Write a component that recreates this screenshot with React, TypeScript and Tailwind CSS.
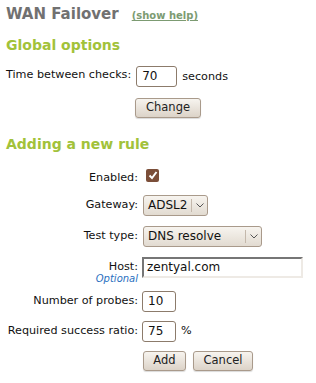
import React from "react";

const Btn = ({ children, className = "" }: { children: React.ReactNode; className?: string }) => (
  <button
    className={`h-[20px] rounded-[3px] border border-[#a99a8b] bg-gradient-to-b from-[#f7f4ef] to-[#dcd3c8] text-[11.5px] text-[#222] leading-none shadow-[0_1px_1px_rgba(0,0,0,0.15)] ${className}`}
  >
    {children}
  </button>
);

const TextBox = ({ value, className = "" }: { value: string; className?: string }) => (
  <div
    className={`flex h-[21px] items-center rounded-[3px] border border-[#8c7b6b] bg-white px-[5px] text-[12px] text-[#111] ${className}`}
  >
    {value}
  </div>
);

const Select = ({ value, className = "" }: { value: string; className?: string }) => (
  <div
    className={`flex h-[21px] items-stretch rounded-[3px] border border-[#a99a8b] bg-gradient-to-b from-[#f7f4ef] to-[#e2dbd1] text-[12px] text-[#111] ${className}`}
  >
    <span className="flex flex-1 items-center whitespace-nowrap pl-[4px]">{value}</span>
    <span className="my-[3px] w-px bg-[#c4b8ab]" />
    <span className="flex w-[15px] items-center justify-center">
      <svg width="8" height="5" viewBox="0 0 8 5">
        <path d="M0.5 0.5 L4 4 L7.5 0.5" fill="none" stroke="#555" strokeWidth="1" />
      </svg>
    </span>
  </div>
);

const Row = ({ label, children, extra, className = "" }: { label: string; children: React.ReactNode; extra?: React.ReactNode; className?: string }) => (
  <div className={`flex items-start ${className}`}>
    <div className="flex w-[133px] shrink-0 flex-col items-end whitespace-nowrap pr-[1px] pt-[3px] leading-[13px]">
      <span>{label}</span>
      {extra}
    </div>
    <div className="ml-[3px] flex items-center">{children}</div>
  </div>
);

export default function App() {
  return (
    <div className="min-h-[383px] bg-white px-[6px] pt-[3px] text-[11.2px] text-[#111]" style={{ fontFamily: '"DejaVu Sans", Verdana, sans-serif' }}>
      <div className="flex items-baseline">
        <h1 className="text-[15px] font-bold text-[#717171]">WAN Failover</h1>
        <a className="ml-[13px] text-[10px] font-bold text-[#7c9b72] underline">(show help)</a>
      </div>

      <h2 className="mt-[9px] text-[14px] font-bold text-[#a2c23a]">Global options</h2>

      <div className="mt-[10px] flex items-start">
        <span className="pt-[2px] leading-[13px]">Time between checks:</span>
        <TextBox value="70" className="ml-[5px] w-[41px]" />
        <span className="ml-[5px] mt-[4px] leading-[13px]">seconds</span>
      </div>
      <div className="mt-[11px] pl-[129px]">
        <Btn className="w-[66px]">Change</Btn>
      </div>

      <h2 className="mt-[16px] text-[14px] font-bold text-[#a2c23a]">Adding a new rule</h2>

      <Row label="Enabled:" className="mt-[13px]">
        <div className="ml-[4px] mt-[1px] flex h-[13px] w-[13px] items-center justify-center rounded-[2px] bg-[#7b4e39]">
          <svg width="10" height="9" viewBox="0 0 10 9">
            <path d="M1.5 4.5 L4 7 L8.5 1" fill="none" stroke="#fff" strokeWidth="2" />
          </svg>
        </div>
      </Row>

      <Row label="Gateway:" className="mt-[11px]">
        <Select value="ADSL2" className="ml-[1px] w-[65px]" />
      </Row>

      <Row label="Test type:" className="mt-[10px]">
        <Select value="DNS resolve" className="ml-[1px] w-[119px]" />
      </Row>

      <Row
        label="Host:"
        className="mt-[10px]"
        extra={<span className="text-[10px] italic leading-[12px] text-[#2a6fc0]">Optional</span>}
      >
        <div className="flex h-[21px] w-[161px] items-center border-[2px] border-b-[#eeeae5] border-l-[#767676] border-r-[#eeeae5] border-t-[#767676] bg-white px-[3px] text-[12px]">
          zentyal.com
        </div>
      </Row>

      <Row label="Number of probes:" className="mt-[6px]">
        <TextBox value="10" className="w-[34px]" />
      </Row>

      <Row label="Required success ratio:" className="mt-[9px]">
        <TextBox value="75" className="w-[34px]" />
        <span className="ml-[5px]">%</span>
      </Row>

      <div className="mt-[9px] flex gap-[7px] pl-[137px]">
        <Btn className="w-[43px]">Add</Btn>
        <Btn className="w-[60px]">Cancel</Btn>
      </div>
    </div>
  );
}
